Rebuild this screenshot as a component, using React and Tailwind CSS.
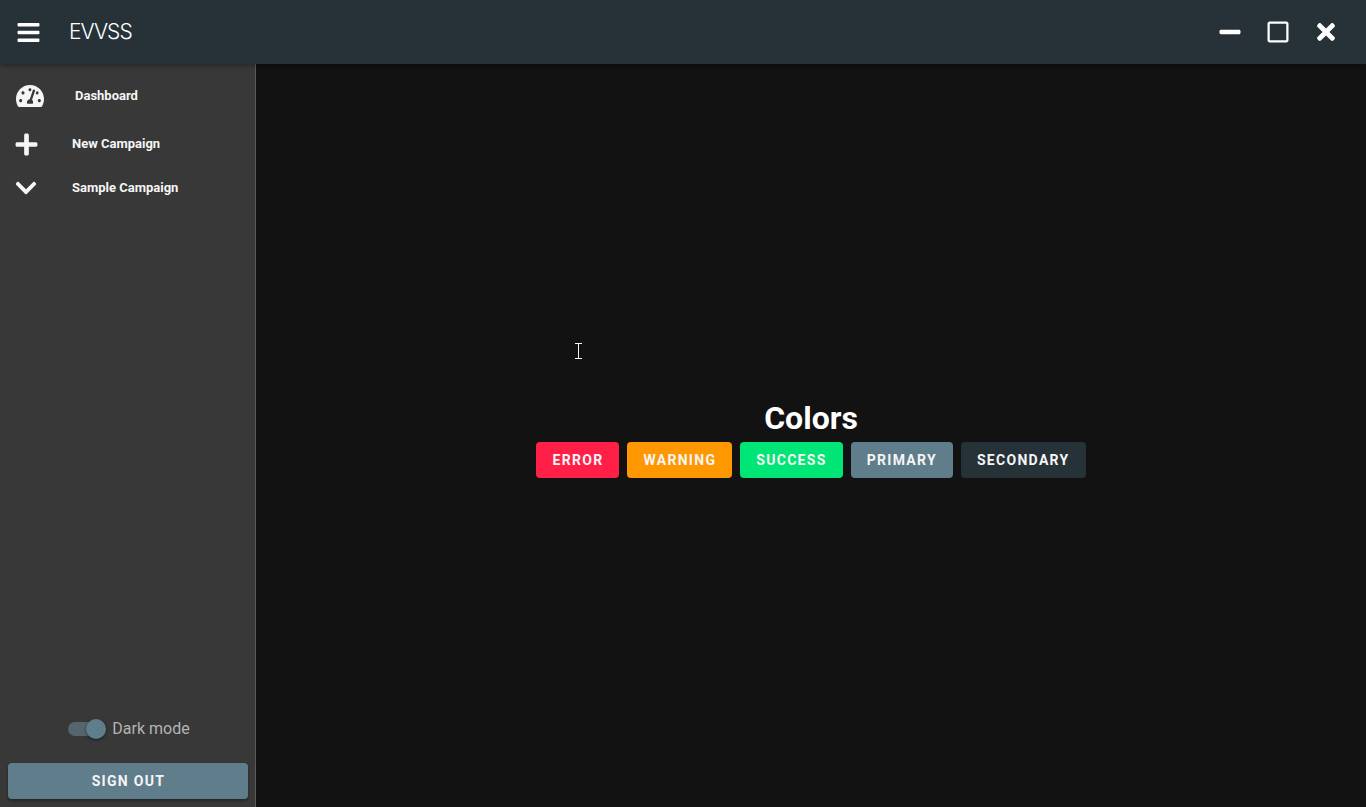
import React from 'react';
import { FaBars, FaTachometerAlt, FaPlus, FaChevronDown, FaMinus, FaRegSquare, FaTimes } from 'react-icons/fa';

const colorButtons = [
    { label: 'ERROR', cls: 'bg-[#ff1f47]' },
    { label: 'WARNING', cls: 'bg-[#ff9800]' },
    { label: 'SUCCESS', cls: 'bg-[#00e676]' },
    { label: 'PRIMARY', cls: 'bg-[#607d8b]' },
    { label: 'SECONDARY', cls: 'bg-[#263238]' },
];

const NavItem = ({ icon, label, textClass }) => (
    <div className="h-11 flex items-center">
        <div className="w-[72px] pl-4 flex items-center text-[#f5f5f5]">{icon}</div>
        <span className={`text-[13px] font-bold text-[#f5f5f5] ${textClass}`}>{label}</span>
    </div>
);

const WindowButton = ({ children }) => (
    <div className="w-12 h-12 flex items-center justify-center text-white">{children}</div>
);

const App = () => {
    return (
        <div className="h-screen w-full flex flex-col bg-[#121212] overflow-hidden font-['Roboto',sans-serif]">
            <header className="h-16 shrink-0 bg-[#263238] flex items-center justify-between z-10 shadow-[0_2px_4px_rgba(0,0,0,0.3)]">
                <div className="flex items-center">
                    <FaBars size={25} className="ml-4 text-white" />
                    <span className="ml-[28px] text-[21px] font-light text-white tracking-[-1px] font-['Inter',sans-serif]">EVVSS</span>
                </div>
                <div className="flex items-center mr-4">
                    <WindowButton><FaMinus size={24} /></WindowButton>
                    <WindowButton><FaRegSquare size={24} /></WindowButton>
                    <WindowButton><FaTimes size={26} /></WindowButton>
                </div>
            </header>

            <div className="flex flex-1 min-h-0">
                <aside className="w-[256px] shrink-0 bg-[#383838] border-r border-[#5a5a5a] flex flex-col justify-between">
                    <nav className="pt-[10px]">
                        <div className="mb-1">
                            <NavItem label="Dashboard" textClass="ml-[3px]" icon={<FaTachometerAlt size={28} />} />
                        </div>
                        <NavItem label="New Campaign" icon={<FaPlus size={25} className="-ml-[2px]" />} />
                        <NavItem label="Sample Campaign" icon={<FaChevronDown size={24} className="-ml-[2px]" />} />
                    </nav>
                    <div className="flex flex-col items-center pb-2">
                        <div className="flex items-center gap-[6px] mb-[22px] pl-[3px]">
                            <div className="relative w-[38px] h-5 flex items-center">
                                <div className="w-[34px] h-[14px] rounded-full bg-[#54656d]" />
                                <div className="absolute right-0 top-0 w-5 h-5 rounded-full bg-[#607d8b] shadow-[0_1px_3px_rgba(0,0,0,0.5)]" />
                            </div>
                            <span className="text-base leading-6 text-[#b4b4b4]">Dark mode</span>
                        </div>
                        <button className="w-[240px] h-9 pl-[2px] rounded bg-[#607d8b] text-sm font-bold tracking-[1.3px] text-[#f5f5f5] shadow-[0_2px_3px_rgba(0,0,0,0.35)]">
                            SIGN OUT
                        </button>
                    </div>
                </aside>
                <main className="relative flex-1 flex flex-col items-center justify-center">
                    <h1 className="text-[32px] leading-[47px] pt-[2px] font-bold text-white">Colors</h1>
                    <div className="flex gap-2">
                        {colorButtons.map((b) => (
                            <button key={b.label} className={`h-9 px-4 pb-px rounded text-sm font-bold tracking-[1.3px] text-[#f5f5f5] ${b.cls}`}>
                                {b.label}
                            </button>
                        ))}
                    </div>
                    {/* mouse cursor caught in the screenshot */}
                    <svg className="absolute left-[319px] top-[279px]" width="7" height="16" viewBox="0 0 7 16" fill="none" stroke="#f5f5f5" strokeWidth="1">
                        <path d="M0 0.5h7M0 15.5h7M3.5 0.5v15" />
                    </svg>
                </main>
            </div>
        </div>
    );
};

export default App;
